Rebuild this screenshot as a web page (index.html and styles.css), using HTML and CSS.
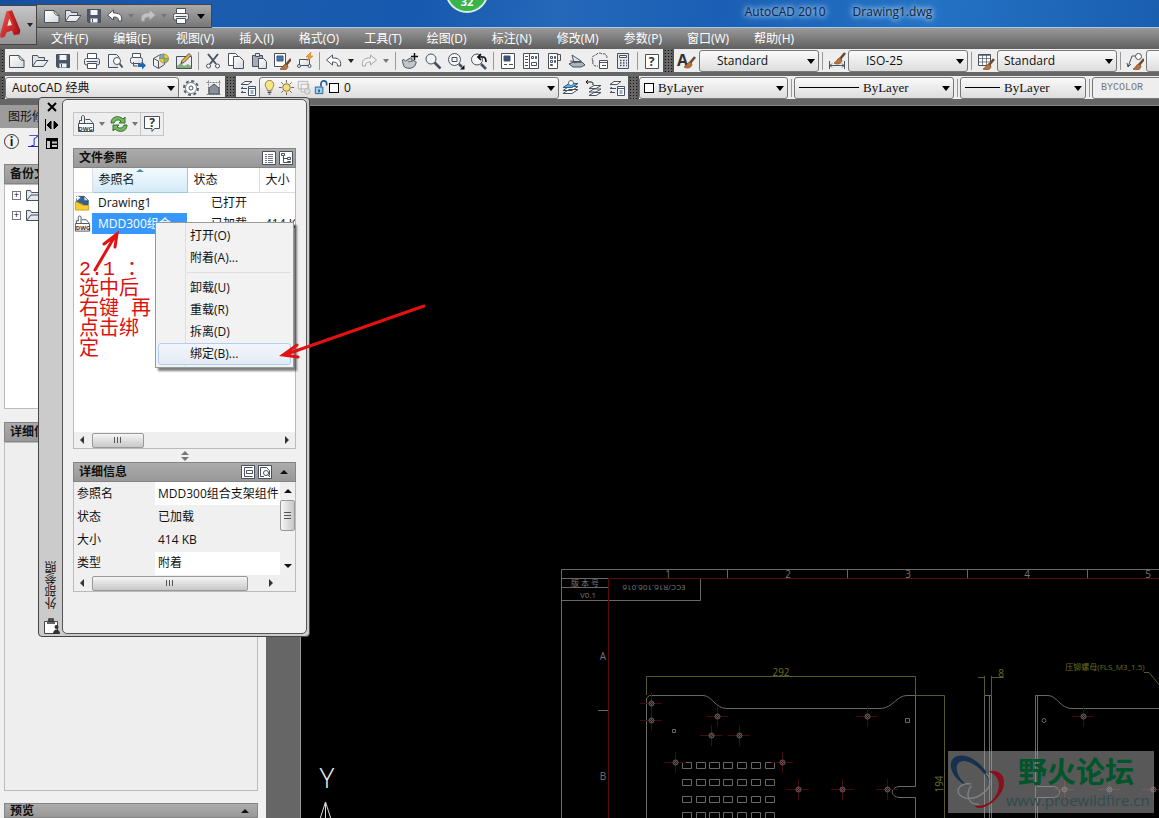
FILE: index.html
```html
<!DOCTYPE html>
<html lang="zh-CN">
<head>
  <meta charset="UTF-8">
  <title>AutoCAD 2010 Drawing1.dwg</title>
  <link rel="stylesheet" href="styles.css">
</head>
<body>

  <!-- Icons -->
  <svg class="sprite" aria-hidden="true">
    <defs>
      <linearGradient id="paper" x1="0" y1="0" x2="1" y2="1"><stop offset="0" stop-color="#fff"/><stop offset="1" stop-color="#d5d9de"/></linearGradient>
      <linearGradient id="red" x1="0" y1="0" x2="1" y2="1"><stop offset="0" stop-color="#f4564f"/><stop offset="1" stop-color="#a80b10"/></linearGradient>
      <g id="brush"><path d="M17 5l-5 6" stroke="#6b4a33" stroke-width="2.6" /><path d="M12 10c-3 0-3 4-6 5 3 2 8 1 8-3z" fill="#b8733a" stroke="#7a4a22" stroke-width=".7"/></g>
    </defs>
    <symbol id="i-new" viewBox="0 0 18 18"><path d="M1.500 3.500H11l5 5v7H1.500z" fill="url(#paper)"/><path d="M11 3.500c0 3 1 5 5 5"/></symbol>
    <symbol id="i-open" viewBox="0 0 18 18"><path d="M1.500 14.500v-11h5l1 2h6v3" fill="#dfe3e8"/><path d="M1.500 14.500l4-6h11.500l-4.500 6z" fill="url(#paper)"/></symbol>
    <symbol id="i-save" viewBox="0 0 18 18"><path d="M2.500 2.500h13v13h-12l-1-1z" fill="#4c5668"/><path d="M5.500 3h7v5h-7zM5.500 11.500h7v4h-7z" fill="#f2f4f6" stroke="none"/><path d="M7.500 12v3"/></symbol>
    <symbol id="i-print" viewBox="0 0 18 18"><path d="M4.500 6.500v-5h9v5" fill="#fff"/><rect x="1.500" y="6.500" width="15" height="6.500" rx="2" fill="url(#paper)"/><path d="M4.500 11.500h9v5h-9z" fill="#fff"/><path d="M3.500 9.500h11"/></symbol>
    <symbol id="i-preview" viewBox="0 0 18 18"><path d="M12 15.500H2.500V2.500h8l3 3" fill="url(#paper)"/><circle cx="11" cy="9" r="3.500" fill="#fff"/><path d="M13.500 11.500l3 4" stroke-width="2"/></symbol>
    <symbol id="i-publish" viewBox="0 0 18 18"><path d="M3.500 5.500v-4h8v4" fill="#fff"/><rect x="1.500" y="5.500" width="12" height="6" rx="2" fill="url(#paper)"/><path d="M4.500 10v4h4"/><path d="M9 12h4V9.500l4 4-4 4V15H9z" fill="#2468a8" stroke="none"/></symbol>
    <symbol id="i-dwf" viewBox="0 0 18 18"><path d="M1.500 6.500l7-4 4 2v8l-6 4-5-3z" fill="url(#paper)"/><path d="M1.500 6.500l5 2.500v7"/><g stroke="#8a7a50" stroke-width=".6"><circle cx="12" cy="6.500" r="4.500" fill="#f3c63a"/><path d="M12 2v4.500H7.500A4.500 4.500 0 0 1 12 2z" fill="#5fb3d8"/><path d="M12 6.500h4.500A4.500 4.500 0 0 1 12 11z" fill="#7fc069"/></g></symbol>
    <symbol id="i-markup" viewBox="0 0 18 18"><path d="M1.500 4.500h15v12h-15z" fill="#e9eef2"/><path d="M2 14l4-3 3 3 4-2 3 2v2H2z" fill="#85ad78" stroke="none"/><path d="M6 11.500l1-3 7-7 2 2-7 7z" fill="#f2b233"/></symbol>
    <symbol id="i-cut" viewBox="0 0 18 18"><path d="M4 2l8 10M14 2L6 12" stroke-width="2"/><circle cx="4.500" cy="14" r="2" fill="#fff"/><circle cx="13.500" cy="14" r="2" fill="#fff"/></symbol>
    <symbol id="i-copy" viewBox="0 0 18 18"><path d="M1.500 1.500h7l2 2v10h-9z" fill="#fff"/><path d="M6.500 4.500h6l4 4v8h-10z" fill="url(#paper)"/></symbol>
    <symbol id="i-paste" viewBox="0 0 18 18"><path d="M2.500 3.500h10v11h-10z" fill="#a7acb3"/><path d="M5.500 1.500h4v3h-4z" fill="#dfe3e8"/><path d="M8.500 6.500h5l3 3v7h-8z" fill="url(#paper)"/></symbol>
    <symbol id="i-match" viewBox="0 0 18 18"><path d="M1.500 1.500h11v13h-11z" fill="#fff"/><path d="M4 4h6v5H4z" fill="#3a79bd"/><g transform="translate(1 2)"><use href="#brush"/></g></symbol>
    <symbol id="i-block" viewBox="0 0 18 18"><path d="M3.500 7.500h10v6h-10z" fill="url(#paper)"/><circle cx="3" cy="14" r="1.500" fill="#fff"/><circle cx="13.500" cy="14" r="1.500" fill="#fff"/><path d="M15 0l-5 5h3l-2 4 6-5h-3z" fill="#f4a62a" stroke="#c2761a" stroke-width=".6"/></symbol>
    <symbol id="i-undo" viewBox="0 0 18 18"><path d="M1.500 8l6-5v3c5 0 9 1 8 8h-3c0-3-1-4-5-4v3z" fill="#fff"/></symbol>
    <symbol id="i-redo" viewBox="0 0 18 18"><path d="M16.500 8l-6-5v3c-5 0-9 1-8 8h3c0-3 1-4 5-4v3z" fill="#f3f3f3" fill-opacity=".5" stroke="#a3a6aa"/></symbol>
    <symbol id="i-pan" viewBox="0 0 18 18"><path d="M1.500 8c1-1 2 0 3 1l5-3c2 0 2 2 1 2l3 1c2 0 2 2 1 3-1 5-8 5-11 3-1-1-2-5-2-7z" fill="#c3c7cc"/><path d="M7 10l5-1" stroke-width=".7"/><path d="M13.500 1v7M10 4.500h7" stroke="#111" stroke-width="1.500"/></symbol>
    <symbol id="i-zoom" viewBox="0 0 18 18"><circle cx="7" cy="7" r="5" fill="#eef4f8"/><path d="M10.500 10.500l6 6" stroke-width="2.600"/></symbol>
    <symbol id="i-zoomwin" viewBox="0 0 18 18"><circle cx="7.500" cy="7.500" r="6" fill="#f5f7f9"/><path d="M5 5.500h5v4H5z"/><path d="M12 12l3 3" stroke-width="2.500"/><path d="M17.500 13v4.500H13z" fill="#111" stroke="none"/></symbol>
    <symbol id="i-zoomprev" viewBox="0 0 18 18"><circle cx="7" cy="7.500" r="5.500" fill="#f5f7f9"/><path d="M11 12l5 5" stroke-width="2.600"/><path d="M9 5h4c3 0 3 4 3 5M11 2L8 5l3 3" stroke="#111" stroke-width="1.700"/></symbol>
    <symbol id="i-props" viewBox="0 0 18 18"><path d="M2.500 1.500h13v15h-13z" fill="#fff"/><path d="M5 4h6v5H5z" fill="#35557c"/><path d="M5 12.500h3m2 0h4"/></symbol>
    <symbol id="i-center" viewBox="0 0 18 18"><path d="M1.500 1.500h15v15h-15zM7.500 2v14" fill="#fff"/><path d="M3 4.500h3M3 7.500h3M3 10.500h3M3 13.500h3M9.500 4.500h2v2h-2zM13.500 4.500h1v2h-1zM9.500 10.500h5v3h-5z"/></symbol>
    <symbol id="i-palette" viewBox="0 0 18 18"><path d="M3.500 1.500h9v15h-9z" fill="#fff"/><path d="M12.500 2.500h3v6h-3M5.500 4.500h2v2h-2zM9.500 4.500h1v2h-1zM5.500 8.500h2v2h-2zM9.500 8.500h1v2h-1zM5.500 12.500h2v1h-2z"/></symbol>
    <symbol id="i-sheet" viewBox="0 0 18 18"><path d="M1 12l4 3h8l4-2-3-3H6z" fill="#aeb4bb"/><path d="M1 12l5-2h8M4 3l9 6-7 2zM2 9l11 1" fill="#e1e4e8"/></symbol>
    <symbol id="i-cloud" viewBox="0 0 18 18"><path d="M2 9C0 6 2 3 5 3c2-3 5-2 6-1 3-1 5 1 5 4M2 9c-1 3 1 6 5 5" stroke-dasharray="3 1"/><path d="M8.500 8.500h8v8h-8z" fill="#fff"/><path d="M8.500 10.500h8M11 13.500h4"/></symbol>
    <symbol id="i-calc" viewBox="0 0 18 18"><path d="M3.500 1.500h11v15h-11z" fill="#e7eaed"/><path d="M5.500 3.500h7v2h-7z" fill="#fff"/><path d="M6 8.500h7M6 11h7M6 13.500h7" stroke-dasharray="1.500 1.500" stroke-width="1.500"/></symbol>
    <symbol id="i-box" viewBox="0 0 18 18"><path d="M2.500 2.500h13v14h-13z" fill="#fff"/></symbol>
    <symbol id="i-text" viewBox="0 0 18 18"><use href="#brush"/></symbol>
    <symbol id="i-dim" viewBox="0 0 18 18"><path d="M1.500 9v8M16.500 9v8M2 13.500h14M4 11.500l-2 2 2 2M14 11.500l2 2-2 2"/><g transform="translate(0 -4)"><use href="#brush"/></g></symbol>
    <symbol id="i-table" viewBox="0 0 18 18"><path d="M1.500 2.500h12v11h-12z" fill="#fff"/><path d="M1.500 3.500h12M1.500 6.500h12M1.500 10h12M5.500 3v10M9.500 3v10" stroke-width=".7"/><g transform="translate(0 2)"><use href="#brush"/></g></symbol>
    <symbol id="i-leader" viewBox="0 0 18 18"><path d="M2 15L6 4h4M1 11l1 4 3-3"/><circle cx="12.500" cy="4.500" r="3" fill="#fff"/><g transform="translate(1 2)"><use href="#brush"/></g></symbol>
    <symbol id="i-gear" viewBox="0 0 18 18"><circle cx="9" cy="9" r="7" stroke-width="2" stroke-dasharray="3 2.500" stroke="#59616b"/><circle cx="9" cy="9" r="5.500" fill="#fff" stroke="#7b828a"/><circle cx="9" cy="9" r="2"/></symbol>
    <symbol id="i-home" viewBox="0 0 18 18"><path d="M1.500 3.500h15M1.500 15.500h15M3.500 1.500v15M14.500 1.500v15" stroke-dasharray="2 1" stroke="#7b828a"/><path d="M4 9l5-4 5 4v6H4z" fill="#8b9199"/></symbol>
    <symbol id="i-layers" viewBox="0 0 18 18"><path d="M2 5.500l4-3h7l-4 3zM2 9.500l2-1.500M2 9.500h6M2 13.500L4 12M2 13.500h5" fill="#fff"/><path d="M9.500 7.500h7v9h-7z" fill="#fff"/><path d="M9.500 9.500h7M11.500 12h3M11.500 14h3" stroke="#2f5e96"/></symbol>
    <symbol id="i-bulb" viewBox="0 0 18 18"><path d="M6.500 12C6.500 9 4.500 9 4.500 6a4.500 4.500 0 0 1 9 0c0 3-2 3-2 6z" fill="#fae486" stroke="#8e7c42"/><path d="M7 14h4M8 16h2" stroke-width="1.500"/></symbol>
    <symbol id="i-sun" viewBox="0 0 18 18"><path d="M9 1v3M9 14v3M1 9h3M14 9h3M3.500 3.500l2 2M12.500 12.500l2 2M14.500 3.500l-2 2M5.500 12.500l-2 2" stroke="#6b6145"/><circle cx="9" cy="9" r="4" fill="#f8df7a" stroke="#7d7046"/></symbol>
    <symbol id="i-vp" viewBox="0 0 18 18"><path d="M3.500 2.500h10v8h-10zM6.500 5.500h8v8h-8z" fill="#f3f3f3" stroke="#b5b5b5"/><circle cx="13" cy="13" r="3" stroke="#b5b5b5" fill="#ddd"/></symbol>
    <symbol id="i-lock" viewBox="0 0 18 18"><path d="M9.500 8V5c0-4 6-4 6 0v2" stroke="#2b5f93" stroke-width="1.800"/><path d="M3.500 8.500h8v7h-8z" fill="#9fd0ee" stroke="#2b5f93"/><path d="M7.500 11v3" stroke="#174067" stroke-width="1.500"/></symbol>
    <symbol id="i-stack1" viewBox="0 0 18 18"><path d="M1 14.500h9l6-4H7zM1 11.500h9l6-4H7z" fill="#fff"/><path d="M1 8.500h9l6-4H7z" fill="#62b0df" stroke="#21639c"/><circle cx="9" cy="4" r="2.500" fill="#fff" stroke="#5c6b79"/></symbol>
    <symbol id="i-stack2" viewBox="0 0 18 18"><path d="M4 16.500h7l5-3H9zM4 13h7l5-3H9zM4 9.500h7l5-3H9z" fill="#fff"/><path d="M1 3h5c2 0 2 1 2 3M3 1L1 3l2 2" stroke="#111"/></symbol>
    <symbol id="i-dwg" viewBox="0 0 18 18"><path d="M2.500 8V5.500h2M8.500 4.500H13l2.500 3V8M1.500 8.500h15v8h-15z" fill="#fff"/><path d="M7.500 8V2c0-2-3-2-3 0v4"/></symbol>
    <symbol id="i-refresh" viewBox="0 0 18 18"><path d="M1 8c0-7 8-8 12-4l2-2v6h-6l2-2C8 4 5 5 4 8zM17 10c0 7-8 8-12 4l-2 2v-6h6l-2 2c3 2 6 1 7-2z" fill="#79b765" stroke="#2f7225"/></symbol>
    <symbol id="i-bubble" viewBox="0 0 18 18"><path d="M1.500 1.500h15v12h-5l-2.500 3v-3H1.500z" fill="#fff"/></symbol>
    <symbol id="i-drawing" viewBox="0 0 18 18"><path d="M3 2h8l4 4v5H3z" fill="#35618f" stroke="#2a4562"/><path d="M11 2v4h4z" fill="#cfdbe7" stroke="none"/><path d="M1.500 7.500l9 4h5v5h-14z" fill="#f8cb32" stroke="#caa01f"/><path d="M4 1v5M1.500 3.500h5" stroke="#fff" stroke-width="1.500"/></symbol>
    <symbol id="i-folder" viewBox="0 0 18 18"><path d="M1.500 14.500v-10h4l1 2h9v8z" fill="#e3e6ea"/><path d="M2 14l4-5h11"/></symbol>
    <symbol id="i-list" viewBox="0 0 14 14"><path d="M.5.500h13v13H.500z" fill="#fff"/><path d="M3 3.500h2M3 5.500h2M3 7.500h2M3 9.500h2M3 11.500h2M6 3.500h5M6 5.500h5M6 7.500h5M6 9.500h5M6 11.500h5" stroke-width=".8"/></symbol>
    <symbol id="i-tree" viewBox="0 0 14 14"><path d="M.5.500h13v13H.500z" fill="#fff"/><path d="M2.500 2.500h3v2h-3zM4.500 5v6.500h4M4.500 7.500h4M8.500 6.500h3v2h-3zM8.500 10.500h3v1h-3z"/></symbol>
    <symbol id="i-detail" viewBox="0 0 14 14"><path d="M.5.500h13v13H.500z" fill="#fff"/><path d="M11.500 2.500h-8v9h8M5.500 5.500h6v3h-6z"/></symbol>
    <symbol id="i-thumb" viewBox="0 0 14 14"><path d="M.5.500h13v13H.500z" fill="#fff"/><path d="M6 11.500H2.500v-9h6l3 3v5"/><circle cx="8" cy="8" r="2.500"/><path d="M10 10l2 2"/></symbol>
  </svg>

  <!-- Title bar -->
  <header class="titlebar">
    <div class="quick">
      <button aria-label="新建"><svg><use href="#i-new"/></svg></button>
      <button aria-label="打开"><svg><use href="#i-open"/></svg></button>
      <button aria-label="保存"><svg><use href="#i-save"/></svg></button>
      <button aria-label="放弃"><svg><use href="#i-undo"/></svg></button>
      <span class="drop dim"></span>
      <button aria-label="重做"><svg><use href="#i-redo"/></svg></button>
      <span class="drop dim"></span>
      <button aria-label="打印"><svg><use href="#i-print"/></svg></button>
      <span class="drop more"></span>
    </div>
    <div class="title"><span>AutoCAD 2010</span><span>Drawing1.dwg</span></div>
    <div class="ball">32</div>
  </header>
  <button class="app" aria-label="应用程序菜单">
    <svg viewBox="0 0 26 34"><path d="M7 2l6-1 9 22-1 4-6 1-2-5-6 2-2 5-4 1-1-3z" fill="url(#red)"/><path d="M8 18l2-8 3 7z" fill="#e4e4e4"/><path d="M13 1l9 22-1 4L9 3z" fill="#8c0c10" opacity=".4"/></svg>
    <span class="drop"></span>
  </button>

  <nav class="menubar">
    <a href="#">文件(F)</a><a href="#">编辑(E)</a><a href="#">视图(V)</a><a href="#">插入(I)</a><a href="#">格式(O)</a><a href="#">工具(T)</a><a href="#">绘图(D)</a><a href="#">标注(N)</a><a href="#">修改(M)</a><a href="#">参数(P)</a><a href="#">窗口(W)</a><a href="#">帮助(H)</a>
  </nav>

  <!-- Toolbars -->
  <div class="toolbar">
    <span class="grip small"></span>
    <button aria-label="新建"><svg><use href="#i-new"/></svg></button>
    <button aria-label="打开"><svg><use href="#i-open"/></svg></button>
    <button aria-label="保存"><svg><use href="#i-save"/></svg></button>
    <span class="sep"></span>
    <button aria-label="打印"><svg><use href="#i-print"/></svg></button>
    <button aria-label="打印预览"><svg><use href="#i-preview"/></svg></button>
    <button aria-label="发布"><svg><use href="#i-publish"/></svg></button>
    <button aria-label="三维 DWF"><svg><use href="#i-dwf"/></svg></button>
    <button aria-label="标记"><svg><use href="#i-markup"/></svg></button>
    <span class="sep"></span>
    <button aria-label="剪切"><svg><use href="#i-cut"/></svg></button>
    <button aria-label="复制"><svg><use href="#i-copy"/></svg></button>
    <button aria-label="粘贴"><svg><use href="#i-paste"/></svg></button>
    <button aria-label="特性匹配"><svg><use href="#i-match"/></svg></button>
    <button aria-label="块编辑器"><svg><use href="#i-block"/></svg></button>
    <span class="sep"></span>
    <button aria-label="放弃"><svg><use href="#i-undo"/></svg></button>
    <span class="drop"></span>
    <button aria-label="重做"><svg><use href="#i-redo"/></svg></button>
    <span class="drop dim"></span>
    <span class="sep"></span>
    <button aria-label="平移"><svg><use href="#i-pan"/></svg></button>
    <button aria-label="缩放"><svg><use href="#i-zoom"/></svg></button>
    <button aria-label="窗口缩放"><svg><use href="#i-zoomwin"/></svg></button>
    <button aria-label="缩放上一个"><svg><use href="#i-zoomprev"/></svg></button>
    <span class="sep"></span>
    <button aria-label="特性"><svg><use href="#i-props"/></svg></button>
    <button aria-label="设计中心"><svg><use href="#i-center"/></svg></button>
    <button aria-label="工具选项板"><svg><use href="#i-palette"/></svg></button>
    <button aria-label="图纸集"><svg><use href="#i-sheet"/></svg></button>
    <button aria-label="标记集"><svg><use href="#i-cloud"/></svg></button>
    <button aria-label="计算器"><svg><use href="#i-calc"/></svg></button>
    <span class="sep"></span>
    <button class="glyph" aria-label="帮助"><svg><use href="#i-box"/></svg><b>?</b></button>
    <span class="grip"></span>
    <button class="glyph letter" aria-label="文字样式"><b>A</b><svg><use href="#i-text"/></svg></button>
    <div class="combo style indent"><select aria-label="文字样式"><option>Standard</option></select></div>
    <span class="sep"></span>
    <button aria-label="标注样式"><svg><use href="#i-dim"/></svg></button>
    <div class="combo style indent"><select aria-label="标注样式"><option>ISO-25</option></select></div>
    <span class="sep"></span>
    <button aria-label="表格样式"><svg><use href="#i-table"/></svg></button>
    <div class="combo style"><select aria-label="表格样式"><option>Standard</option></select></div>
    <span class="sep"></span>
    <button aria-label="多重引线样式"><svg><use href="#i-leader"/></svg></button>
    <div class="combo style indent"><select aria-label="多重引线样式"><option>Standard</option></select></div>
  </div>

  <div class="toolbar">
    <span class="grip small"></span>
    <div class="combo workspace"><select aria-label="工作空间"><option>AutoCAD 经典</option></select></div>
    <button aria-label="工作空间设置"><svg><use href="#i-gear"/></svg></button>
    <button aria-label="我的工作空间"><svg><use href="#i-home"/></svg></button>
    <span class="grip"></span>
    <button aria-label="图层特性"><svg><use href="#i-layers"/></svg></button>
    <div class="combo layer">
      <select aria-label="图层"><option>0</option></select>
      <div class="states"><svg><use href="#i-bulb"/></svg><svg><use href="#i-sun"/></svg><svg><use href="#i-vp"/></svg><svg><use href="#i-lock"/></svg><i class="swatch"></i></div>
    </div>
    <button aria-label="置为当前"><svg><use href="#i-stack1"/></svg></button>
    <button aria-label="上一个图层"><svg><use href="#i-stack2"/></svg></button>
    <button aria-label="图层状态"><svg><use href="#i-layers"/></svg></button>
    <span class="grip"></span>
    <div class="combo color serif"><select aria-label="颜色"><option>ByLayer</option></select><div class="states"><i class="swatch"></i></div></div>
    <span class="sep"></span>
    <div class="combo linetype serif"><select aria-label="线型"><option>ByLayer</option></select><div class="states"><i class="line"></i></div></div>
    <span class="sep"></span>
    <div class="combo lineweight serif"><select aria-label="线宽"><option>ByLayer</option></select><div class="states"><i class="line short"></i></div></div>
    <span class="sep"></span>
    <div class="combo plot"><select aria-label="打印样式" disabled><option>BYCOLOR</option></select></div>
  </div>

  <main class="work">
    <!-- Drawing recovery palette -->
    <aside class="recovery">
      <h2 class="caption">图形修复管理器</h2>
      <p class="info"><span>i</span><a href="#">了解有关图形修复</a></p>
      <h3 class="bar">备份文件</h3>
      <ul class="backup">
        <li><i>+</i><svg><use href="#i-folder"/></svg></li>
        <li><i>+</i><svg><use href="#i-folder"/></svg></li>
      </ul>
      <h3 class="bar">详细信息</h3>
      <div class="well"></div>
      <h3 class="bar">预览<span class="tri-up"></span></h3>
    </aside>

    <!-- Model space -->
    <section class="model">
      <svg class="drawing">
        <defs>
          <g id="hole"><path class="r" d="M-11 .5H11M.5-10V11"/><circle cx=".5" cy=".5" r="2.500" class="g"/><circle cx=".5" cy=".5" r="1" class="g"/></g>
          <g id="slots">
            <path class="g" d="M682.500 0h9v6h-9zM696.500 0h9v6h-9zM709.500 0h10v6h-10zM723.500 0h9v6h-9zM737.500 0h9v6h-9zM751.500 0h9v6h-9zM765.500 0h9v6h-9z"/>
          </g>
        </defs>
        <g transform="translate(-301 -106)">
          <path class="g" d="M561.500 818V569.500H1159M561 578.500h47M561 587.500h47M561 600.500h139.500V578M727.500 570v8M847.500 570v8M967.500 570v8M1087.500 570v8M598 710.500h10"/>
          <path class="r strong" d="M1159 578.500H608.500V818"/>
          <g class="t">
            <text x="668" y="578">1</text><text x="788" y="578">2</text><text x="908" y="578">3</text><text x="1027" y="578">4</text><text x="1148" y="578">5</text>
            <text x="603" y="660">A</text><text x="603" y="780">B</text>
            <text class="tiny" x="585" y="586">版 本 号</text><text class="tiny" x="588" y="598">V0.1</text>
            <text class="tiny" transform="translate(654 585) rotate(180)">ECC/R16.106.016</text>
          </g>
          <path class="y" d="M646.500 695V676.500H915.500V695M915 695.500H944.500V818M984.500 695V676M991.500 695V676M978 677.500h6M991 677.500h13M1144 672.500h5l10 12"/>
          <g class="t ty">
            <text x="781" y="676">292</text><text x="1001" y="677">8</text>
            <text transform="translate(943 784) rotate(-90)">194</text>
            <text class="tiny" x="1105" y="670">压铆螺母(FLS_M3_1.5)</text>
          </g>
          <path class="g" d="M646.500 818V698l3-2.500H703c9 0 12 13 24 13H880c13 0 16-13 27-13h8.500V786.500H899c-9 1-9 10 0 11h16.500V818"/>
          <path class="g" d="M984.500 818V695.500h7V818M989.500 695V818M1035.500 818V695.500H1048c9 0 12 13 24 13h87M1037.500 695v91.500h16c8 1 8 10 0 11h-16V818"/>
          <path class="g" d="M672.500 729.500h3v3h-3zM905.500 718.500h4v4h-4z"/><circle class="g" cx="1044" cy="720.500" r="2"/>
          <use href="#slots" y="762.500"/><use href="#slots" y="779.500"/><use href="#slots" y="796.500"/><use href="#slots" y="812.500"/>
          <use href="#hole" x="651" y="703"/><use href="#hole" x="651" y="720"/><use href="#hole" x="717" y="716"/><use href="#hole" x="711" y="735"/>
          <use href="#hole" x="739" y="735"/><use href="#hole" x="675" y="762"/><use href="#hole" x="782" y="762"/><use href="#hole" x="798" y="789"/>
          <use href="#hole" x="842" y="789"/><use href="#hole" x="887" y="789"/><use href="#hole" x="867" y="716"/><use href="#hole" x="1083" y="716"/>
          <use href="#hole" x="1064" y="789"/><use href="#hole" x="1109" y="789"/><use href="#hole" x="1153" y="789"/>
          <text class="ucs" x="327" y="788">Y</text>
          <path class="w" d="M320 819l5.500-17 5.500 17M325.500 803v16"/>
        </g>
      </svg>
      <div class="watermark">
        <svg viewBox="0 0 60 60">
          <path d="M44 32C40 12 17-2 6 6c-9 9 3 26 15 29C11 29 6 17 11 11c7-6 24 4 33 21z" fill="#17304d"/>
          <path d="M42 20c16-4 21 14 10 26-8 10-22 16-24 9 8 3 19-3 23-13 4-9 1-18-9-22z" fill="#8c0d1c"/>
          <path d="M24 33c-15-2-19 12-5 15 11 1 20-6 24-13 1-6-1-11-4-13M24 35c-7 10-2 20 8 19" fill="none" stroke="#7d8186" stroke-width="1.500"/>
        </svg>
        <div><strong>野火论坛</strong><span>www.proewildfire.cn</span></div>
      </div>
    </section>
  </main>

  <!-- External references palette -->
  <section class="xref">
    <div class="spine">
      <button aria-label="关闭"><svg viewBox="0 0 12 12"><path d="M2 2l8 8M10 2l-8 8" stroke="#000" stroke-width="2"/></svg></button>
      <button aria-label="自动隐藏"><svg viewBox="0 0 12 12"><path d="M-.5 0v12M5 2v8L1 6zM8 2v8l4-4z" fill="#000" stroke="#000"/></svg></button>
      <button aria-label="特性"><svg viewBox="0 0 12 12"><path d="M0 1h12v11H0z" fill="#000"/><path d="M1 4h3v7H1zM6 4.500h5v2H6zM6 8h5v2H6z" fill="#ccc"/></svg></button>
      <span class="name">外部参照</span>
      <svg class="clip" viewBox="0 0 16 16"><path d="M.5 3.500h13v12H.500z" fill="#fff" stroke="#444"/><path d="M3 5h8M5 3h4V1H5z" stroke="#333" stroke-width="1.500" fill="none"/><path d="M12.500 7a2 2 0 1 1 0 4 2 2 0 0 1 0-4zM9 16c0-6 7-6 7 0z" fill="#333"/></svg>
    </div>
    <div class="panel">
      <div class="tools">
        <button class="glyph dwg" aria-label="附着 DWG"><svg><use href="#i-dwg"/></svg><b>DWG</b></button><span class="drop dim"></span>
        <button aria-label="刷新"><svg><use href="#i-refresh"/></svg></button><span class="drop dim"></span>
        <button class="glyph" aria-label="帮助"><svg><use href="#i-bubble"/></svg><b>?</b></button>
      </div>

      <h3 class="bar">文件参照
        <span class="right"><button aria-label="列表图"><svg><use href="#i-list"/></svg></button><button aria-label="树状图"><svg><use href="#i-tree"/></svg></button></span>
      </h3>
      <div class="list">
        <table>
          <thead><tr><th class="c-icon"></th><th class="c-name sorted">参照名</th><th class="c-state">状态</th><th>大小</th></tr></thead>
          <tbody>
            <tr><td class="ico"><svg><use href="#i-drawing"/></svg></td><td>Drawing1</td><td class="state">已打开</td><td></td></tr>
            <tr><td class="ico glyph dwg"><svg><use href="#i-dwg"/></svg><b>DWG</b></td><td class="selected">MDD300组合</td><td class="state">已加载</td><td>414 KB</td></tr>
          </tbody>
        </table>
        <div class="hscroll"><i class="tri-left"></i><span class="thumb"></span><i class="tri-right"></i></div>
      </div>
      <div class="splitter"><i class="tri-up"></i><i class="tri-down"></i></div>

      <h3 class="bar">详细信息
        <span class="right"><button aria-label="详细信息"><svg><use href="#i-detail"/></svg></button><button aria-label="预览"><svg><use href="#i-thumb"/></svg></button><i class="tri-up"></i></span>
      </h3>
      <div class="details">
        <div class="rows">
          <table>
            <tr><th>参照名</th><td class="edit">MDD300组合支架组件</td></tr>
            <tr><th>状态</th><td>已加载</td></tr>
            <tr><th>大小</th><td>414 KB</td></tr>
            <tr><th>类型</th><td class="edit">附着</td></tr>
          </table>
          <div class="vscroll"><i class="tri-up"></i><span class="thumb"></span><i class="tri-down"></i></div>
        </div>
        <div class="hscroll"><i class="tri-left"></i><span class="thumb wide"></span><i class="tri-right"></i></div>
      </div>
    </div>
  </section>

  <!-- Context menu -->
  <div class="context">
    <button>打开(O)</button>
    <button>附着(A)...</button>
    <hr>
    <button>卸载(U)</button>
    <button>重载(R)</button>
    <button>拆离(D)</button>
    <button class="hover">绑定(B)...</button>
  </div>

  <!-- Red notes -->
  <p class="note">2.1 ：<br>选中后<br>右键 再<br>点击绑<br>定</p>
  <svg class="arrows"><path d="M95 270l20-34M104 244l13-10-2 13M424 306L284 355M297 345l-14 10 15 2"/></svg>

</body>
</html>
```
FILE: styles.css
```css
* {
  box-sizing: border-box;
}

body {
  margin: 0;
  height: 100vh;
  display: flex;
  flex-direction: column;
  overflow: hidden;
  background: #666;
  color: #111;
  font: 12px/16px "Open Sans", "Noto Sans CJK SC", sans-serif;
}

button {
  display: flex;
  align-items: center;
  justify-content: center;
  padding: 0;
  border: none;
  background: none;
  color: inherit;
  font: inherit;
}

svg {
  width: 18px;
  height: 18px;
  flex: none;
  fill: none;
  stroke: #48515d;
}

symbol, svg[viewBox] {
  overflow: visible;
}

svg[viewBox] {
  stroke: none;
}

h2, h3, p, ul {
  margin: 0;
  padding: 0;
}

.sprite {
  position: absolute;
  width: 0;
  height: 0;
}

/* small triangles */
.drop {
  width: 12px;
  flex: none;
  display: flex;
  justify-content: center;
}

.drop::after {
  content: "";
  border: 3px solid transparent;
  border-top: 4px solid #222;
  border-bottom: none;
}

.drop.dim::after {
  border-top-color: #777;
}

.tri-up, .tri-down {
  border: 4px solid transparent;
  border-bottom: 4px solid #111;
  border-top: none;
}

.tri-down {
  border-top: 4px solid #111;
  border-bottom: none;
}

.tri-left, .tri-right {
  border: 4px solid transparent;
  border-right: 4px solid #333;
  border-left: none;
}

.tri-right {
  border-left: 4px solid #333;
  border-right: none;
}

/* title bar */
.titlebar {
  position: relative;
  height: 28px;
  flex: none;
  background: linear-gradient(100deg, #174f9f 0%, #1c5cae 20%, #1659ae 36%, #2568ba 48%, #1a5fb5 62%, #2472c4 80%, #1a5eb0 100%);
  border-bottom: 1px solid #a9c8e8;
}

.quick {
  position: absolute;
  left: 36px;
  top: 4px;
  width: 176px;
  height: 24px;
  display: flex;
  align-items: center;
  padding-left: 5px;
  background: linear-gradient(#aaa, #777);
  border: 1px solid #444;
}

.quick button {
  width: 23px;
  height: 22px;
}

.quick .more {
  width: 20px;
}

.quick .more::after {
  border-width: 5px 4px 0;
  border-top-color: #000;
}

.title {
  display: flex;
  gap: 27px;
  padding: 4px 0 0 64%;
  margin-left: 3px;
  color: #14253d;
  text-shadow: 0 0 4px #a5cbee, 0 0 6px #a5cbee, 0 0 8px #a5cbee;
}

.ball {
  position: absolute;
  top: -32px;
  left: 445px;
  width: 44px;
  height: 45px;
  border-radius: 50%;
  border: 2px solid #d5eedd;
  background: #38b44a;
  color: #fff;
  font-weight: bold;
  font-size: 11px;
  line-height: 64px;
  text-align: center;
}

.app {
  position: absolute;
  top: 5px;
  left: 0;
  width: 37px;
  height: 40px;
  background: linear-gradient(#c6c6c6, #939393);
  border: 1px solid #444;
  border-left: none;
}

.app svg {
  width: 24px;
  height: 34px;
}

.menubar {
  display: flex;
  gap: 25px;
  height: 21px;
  flex: none;
  padding: 3px 0 0 51px;
  background: linear-gradient(#999, #5f5f5f);
  overflow: hidden;
}

.menubar a {
  color: #fff;
  text-decoration: none;
  white-space: nowrap;
}

/* toolbars */
.toolbar {
  display: flex;
  align-items: center;
  height: 23px;
  margin-bottom: 4px;
  flex: none;
  overflow: hidden;
  background: #eee;
}

.toolbar button {
  width: 23px;
  height: 22px;
  flex: none;
}

.toolbar .sep {
  width: 6px;
  height: 18px;
  flex: none;
  background: linear-gradient(#999, #999) center / 1px 100% no-repeat;
}

.grip {
  width: 11px;
  height: 100%;
  flex: none;
  background: radial-gradient(circle, #111 1px, transparent 1px) 2px 0 / 3px 3px, #666;
  border-left: 2px solid #555;
  border-right: 2px solid #555;
}

.grip.small {
  width: 5px;
}

.glyph {
  position: relative;
}

.glyph b {
  position: absolute;
  left: 0;
  right: 0;
  top: 4px;
  text-align: center;
  line-height: 16px;
  color: #333;
}

.toolbar .letter {
  width: 25px;
}

.letter b {
  right: 8px;
  top: 2px;
  font-size: 16px;
}

.letter svg {
  position: relative;
}

.dwg b {
  top: 11px;
  font-size: 6px;
  line-height: 8px;
}

.combo {
  position: relative;
  height: 22px;
  flex: none;
}

.combo::after {
  content: "";
  position: absolute;
  right: 4px;
  top: 9px;
  border: 4px solid transparent;
  border-top: 5px solid #000;
  border-bottom: none;
}

.combo select {
  appearance: none;
  width: 100%;
  height: 100%;
  padding: 0 16px 0 6px;
  border: 1px solid #777;
  border-radius: 3px;
  background: linear-gradient(#fafafa, #ddd);
  color: #111;
  font: inherit;
}

.combo.style {
  width: 120px;
}

.combo.indent select {
  padding-left: 17px;
}

.combo.workspace {
  width: 174px;
}

.combo.layer {
  width: 300px;
}

.combo.layer select {
  padding-left: 84px;
}

.combo.color {
  width: 149px;
}

.combo.color select {
  padding-left: 18px;
}

.combo.linetype {
  width: 160px;
}

.combo.linetype select {
  padding-left: 68px;
}

.combo.lineweight {
  width: 126px;
}

.combo.lineweight select {
  padding-left: 43px;
}

.combo.plot {
  width: 120px;
}

.combo.plot select {
  padding-left: 8px;
  color: #777;
  background: #eee;
  font: 10px "Liberation Mono", monospace;
  opacity: 1;
}

.combo.serif {
  font-family: "Liberation Serif", serif;
  font-size: 13px;
}

.states {
  position: absolute;
  left: 5px;
  top: 0;
  height: 100%;
  display: flex;
  align-items: center;
  pointer-events: none;
}

.layer .states {
  left: 2px;
}

.states svg {
  width: 17px;
  height: 17px;
}

.swatch {
  width: 10px;
  height: 10px;
  border: 1px solid #000;
  background: #fff;
}

.line {
  width: 60px;
  height: 1px;
  background: #000;
}

.line.short {
  width: 35px;
}

/* work area */
.work {
  flex: 1;
  min-height: 0;
  display: flex;
  margin-top: 2px;
}

.bar {
  display: flex;
  align-items: center;
  height: 20px;
  flex: none;
  padding: 0 5px;
  background: linear-gradient(#acacac, #989898);
  border: 1px solid #858585;
  font-size: 12px;
  white-space: nowrap;
}

.recovery {
  width: 266px;
  flex: none;
  display: flex;
  flex-direction: column;
  padding-right: 8px;
  background: #f0f0f0;
}

.caption {
  height: 23px;
  flex: none;
  padding: 4px 8px;
  margin: 0 -8px 0 0;
  background: #9c9c9c;
  font-size: 12px;
  font-weight: normal;
}

.info {
  display: flex;
  align-items: center;
  gap: 9px;
  height: 26px;
  flex: none;
  margin-bottom: 10px;
  padding-left: 4px;
}

.info span {
  width: 15px;
  height: 15px;
  border: 1px solid #333;
  border-radius: 50%;
  font-weight: bold;
  line-height: 13px;
  text-align: center;
}

.info a {
  color: #3a1fc0;
}

.recovery .bar {
  margin-left: 4px;
}

.recovery .bar .tri-up {
  margin-left: auto;
  margin-right: 3px;
}

.backup {
  height: 225px;
  flex: none;
  margin: 0 0 13px 4px;
  background: #fff;
  border: 1px solid #bbb;
  list-style: none;
}

.backup li {
  display: flex;
  align-items: center;
  gap: 4px;
  height: 20px;
  padding-left: 7px;
}

.backup i {
  width: 9px;
  height: 9px;
  border: 1px solid #777;
  font: 9px/7px "Liberation Sans", sans-serif;
  text-align: center;
}

.well {
  flex: 1;
  margin: 0 0 12px 4px;
  border: 1px solid #bbb;
  background: #eee;
}

.recovery .bar:last-child {
  height: 15px;
}

.model {
  position: relative;
  flex: 1;
  min-width: 0;
  margin-left: 34px;
  border-top: 1px solid #888;
  border-left: 1px solid #999;
  background: #000;
  overflow: hidden;
}

.drawing {
  display: block;
  width: 100%;
  height: 100%;
}

.g { stroke: #686868; fill: none; }
.r { stroke: #480808; fill: none; }
.r.strong { stroke: #5c0c0c; }
.y { stroke: #59592c; fill: none; }
.w { stroke: #ddd; fill: none; }

.t text {
  fill: #777;
  stroke: none;
  font-size: 10px;
  text-anchor: middle;
}

.t .tiny {
  font-size: 8px;
}

.ty text {
  fill: #6c6c20;
}

.ucs {
  fill: #eee;
  stroke: none;
  font-size: 28px;
  font-weight: 300;
  text-anchor: middle;
}

.watermark {
  position: absolute;
  right: 5px;
  bottom: 5px;
  display: flex;
  gap: 2px;
  width: 206px;
  height: 62px;
  background: rgba(160, 160, 160, 0.55);
  white-space: nowrap;
}

.watermark svg {
  width: 58px;
  height: 60px;
}

.watermark strong {
  display: block;
  margin: 4px 0 2px 10px;
  color: #00552a;
  font-size: 29px;
  line-height: 34px;
}

.watermark span {
  display: block;
  margin-left: -2px;
  color: #2f4b50;
  font-size: 15px;
  line-height: 18px;
}

/* external references palette */
.xref {
  position: absolute;
  left: 38px;
  top: 97px;
  width: 272px;
  height: 540px;
  display: flex;
  padding: 1px 2px 2px 0;
  background: #cbcbcb;
  border: 1px solid #444;
  border-radius: 4px;
}

.spine {
  width: 23px;
  display: flex;
  flex-direction: column;
  align-items: center;
  gap: 6px;
  padding: 2px 0 0 3px;
}

.spine button svg {
  width: 12px;
  height: 12px;
}

.spine .name {
  margin-top: auto;
  writing-mode: vertical-rl;
  transform: rotate(180deg);
}

.spine .clip {
  width: 16px;
  height: 16px;
  margin-top: 3px;
}

.panel {
  flex: 1;
  min-width: 0;
  display: flex;
  flex-direction: column;
  padding: 12px 10px;
  background: #f0f0f0;
  border: 1px solid #555;
  border-radius: 5px;
}

.tools {
  display: flex;
  align-items: center;
  align-self: flex-start;
  height: 24px;
  margin-bottom: 12px;
  border: 1px solid #c5c5c5;
  background: #eee;
}

.tools button {
  width: 23px;
  height: 22px;
}

.tools button:last-child {
  border-left: 1px solid #c5c5c5;
}

.tools .drop {
  width: 10px;
}

.tools b {
  top: 2px;
}

.tools .dwg b {
  top: 12px;
}

.right {
  display: flex;
  align-items: center;
  gap: 3px;
  margin-left: auto;
  margin-right: -3px;
}

.right svg {
  width: 14px;
  height: 14px;
}

.right .tri-up {
  margin: 0 5px;
}

.list {
  height: 281px;
  display: flex;
  flex-direction: column;
  overflow: hidden;
  background: #fff;
  border: 1px solid #bbb;
  border-top: none;
}

.list table {
  table-layout: fixed;
  width: 232px;
  border-collapse: collapse;
}

.list th, .list td {
  height: 21px;
  padding: 0 0 0 6px;
  font-weight: normal;
  text-align: left;
  white-space: nowrap;
  overflow: hidden;
}

.list th {
  height: 24px;
  border-right: 1px solid #ddd;
  border-bottom: 1px solid #ddd;
}

.c-icon { width: 18px; }
.c-name { width: 95px; }
.c-state { width: 72px; }

.list .sorted {
  position: relative;
  background: linear-gradient(#f2f9fd, #d3ebf7);
  border-color: #9dcbe4;
}

.sorted::before {
  content: "";
  position: absolute;
  top: 1px;
  left: 43px;
  border: 4px solid transparent;
  border-bottom: 3px solid #4c87a8;
  border-top: none;
}

.list .ico {
  padding: 0;
}

.list .ico svg {
  display: block;
  width: 17px;
}

.list .state {
  padding-left: 24px;
}

.list .selected {
  background: #3797fb;
  color: #fff;
}

.hscroll {
  display: flex;
  align-items: center;
  height: 16px;
  margin-top: auto;
  padding: 0 6px;
  background: #efefef;
}

.thumb {
  width: 52px;
  height: 15px;
  margin-left: 8px;
  border: 1px solid #999;
  border-radius: 2px;
  background: repeating-linear-gradient(90deg, #555 0 1px, transparent 1px 3px) center / 8px 6px no-repeat, linear-gradient(#f5f5f5, #c8c8c8);
}

.thumb.wide {
  width: 156px;
}

.hscroll .tri-right {
  margin-left: auto;
}

.details .hscroll .tri-right {
  margin-right: 16px;
}

.splitter {
  display: flex;
  flex-direction: column;
  align-items: center;
  justify-content: center;
  gap: 2px;
  height: 13px;
}

.splitter .tri-up { border-bottom-color: #777; }
.splitter .tri-down { border-top-color: #777; }

.details {
  border: 1px solid #bbb;
  border-top: none;
}

.rows {
  display: flex;
  height: 93px;
  overflow: hidden;
}

.rows table {
  flex: 1;
  table-layout: fixed;
  width: 206px;
  border-collapse: collapse;
}

.rows th, .rows td {
  height: 23px;
  padding: 0 0 0 3px;
  font-weight: normal;
  text-align: left;
  white-space: nowrap;
  overflow: hidden;
}

.rows th {
  width: 81px;
}

.rows .edit {
  background: #fff;
}

.vscroll {
  width: 15px;
  display: flex;
  flex-direction: column;
  align-items: center;
  padding: 7px 0;
}

.vscroll .thumb {
  width: 15px;
  height: 31px;
  margin: 7px 0 auto;
  background: repeating-linear-gradient(#555 0 1px, transparent 1px 3px) center / 7px 8px no-repeat, linear-gradient(90deg, #f5f5f5, #c8c8c8);
}

/* context menu */
.context {
  position: absolute;
  left: 155px;
  top: 222px;
  width: 139px;
  padding: 2px;
  background: linear-gradient(#dedede, #dedede) 29px 0 / 1px 100% no-repeat, #f2f2f2;
  border: 1px solid #999;
  box-shadow: 3px 3px 2px rgba(0, 0, 0, 0.5);
}

.context button {
  justify-content: flex-start;
  width: 100%;
  height: 22px;
  padding-left: 31px;
  border: 1px solid transparent;
  border-radius: 3px;
}

.context .hover {
  background: linear-gradient(#f3f6fb, #e3ebf5);
  border-color: #aecff7;
}

.context hr {
  margin: 3px 0 4px 29px;
  border: none;
  border-top: 1px solid #ddd;
}

/* notes */
.note {
  position: absolute;
  left: 79px;
  top: 260px;
  color: #e01010;
  font: 20px/20px "Liberation Mono", "Noto Sans CJK SC", monospace;
}

.arrows {
  position: absolute;
  left: 0;
  top: 0;
  width: 100%;
  height: 100%;
  pointer-events: none;
  stroke: #e31212;
  stroke-width: 3;
  stroke-linecap: round;
}
```
